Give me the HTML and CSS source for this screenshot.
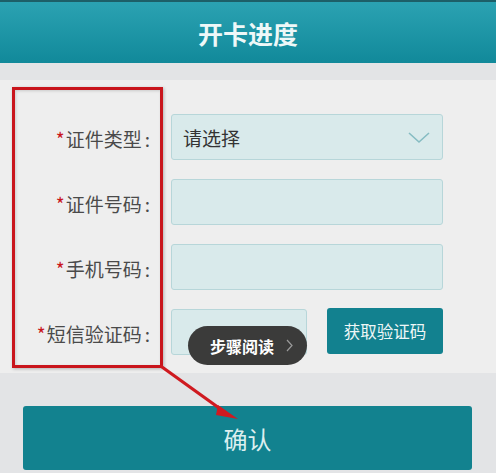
FILE: index.html
```html
<!DOCTYPE html>
<html lang="zh-CN">
<head>
<meta charset="utf-8">
<title>开卡进度</title>
<link rel="stylesheet" href="styles.css">
</head>
<body>
<header class="topbar"><h1 class="title">开卡进度</h1></header>
<main class="page">
  <section class="panel">
    <div class="row">
      <label class="label"><span class="req">*</span>证件类型<span class="colon">:</span></label>
      <div class="field select">
        <span class="select-text">请选择</span>
        <svg class="chev" width="22" height="12" viewBox="0 0 22 12"><path d="M1 1 L11 10 L21 1" fill="none" stroke="#86bcc2" stroke-width="1.6"/></svg>
      </div>
    </div>
    <div class="row">
      <label class="label"><span class="req">*</span>证件号码<span class="colon">:</span></label>
      <div class="field"></div>
    </div>
    <div class="row">
      <label class="label"><span class="req">*</span>手机号码<span class="colon">:</span></label>
      <div class="field"></div>
    </div>
    <div class="row">
      <label class="label"><span class="req">*</span>短信验证码<span class="colon">:</span></label>
      <div class="code-wrap">
        <div class="field short"></div>
        <button class="code-btn">获取验证码</button>
      </div>
    </div>
  </section>
  <div class="confirm-wrap"><button class="confirm">确认</button></div>

  <div class="mark-box"></div>
  <svg class="mark-arrow" width="100" height="70" viewBox="0 0 100 70">
    <path d="M2 2 L66 48" stroke="#cf1a20" stroke-width="3.2" fill="none" stroke-linecap="round"/>
    <path d="M58 40 L78 54 L56 50 Z" fill="#cf1a20"/>
  </svg>
  <div class="toast">步骤阅读<svg class="toast-chev" width="7" height="13" viewBox="0 0 7 13"><path d="M1 1 L6 6.5 L1 12" fill="none" stroke="#9a9a9a" stroke-width="1.2"/></svg></div>
</main>
</body>
</html>
```
FILE: styles.css
```css
* { box-sizing: border-box; }
html, body { margin: 0; padding: 0; }
body {
  width: 496px;
  height: 473px;
  overflow: hidden;
  background: #e3e4e6;
  font-family: "Noto Sans CJK SC", "Noto Sans", sans-serif;
  color: #444;
}
.topbar {
  height: 63px;
  border-top: 2px solid #1d5f68;
  background: linear-gradient(#2ba2b2, #11899a);
  display: flex;
  align-items: center;
  justify-content: center;
}
.title {
  margin: 0;
  font-size: 25px;
  font-weight: 700;
  color: #eef8f8;
}
.page {
  position: relative;
  padding-top: 17px;
}
.panel {
  background: #eeeeee;
  padding: 34px 0 18px 0;
  display: flex;
  flex-direction: column;
  gap: 19px;
}
.row {
  display: grid;
  grid-template-columns: 150px 272px;
  column-gap: 21px;
  align-items: center;
  height: 46px;
}
.label {
  text-align: right;
  font-size: 19px;
  color: #4a4a4a;
  white-space: nowrap;
  padding-top: 3px;
}
.colon { margin-left: 3px; }
.req { color: #c9161d; margin-right: 1px; }
.field {
  height: 46px;
  background: #d9eaeb;
  border: 1px solid #b7d6d9;
  border-radius: 3px;
}
.select {
  display: flex;
  align-items: center;
  justify-content: space-between;
  padding: 0 12px 0 11px;
}
.select-text { font-size: 19px; color: #333; }
.chev { display: block; margin-top: 2px; }
.code-wrap {
  display: flex;
  gap: 20px;
  width: 272px;
}
.field.short { width: 136px; }
.code-btn {
  width: 116px;
  height: 46px;
  border: 0;
  border-radius: 3px;
  background: #12818f;
  color: #eef7f7;
  font-family: inherit;
  font-size: 16.5px;
  padding: 0;
  margin-top: -1px;
}
.confirm-wrap { padding: 33px 24px 0 23px; }
.confirm {
  width: 449px;
  height: 64px;
  border: 0;
  border-radius: 3px;
  background: #12828f;
  color: #dcefef;
  font-family: inherit;
  font-size: 24px;
  padding: 0;
}
.mark-box {
  position: absolute;
  left: 12px;
  top: 24px;
  width: 151px;
  height: 281px;
  border: 3px solid #c9151c;
  box-shadow: 1px 1px 3px rgba(0,0,0,0.25), inset 1px 1px 3px rgba(0,0,0,0.15);
}
.mark-arrow {
  position: absolute;
  left: 160px;
  top: 302px;
}
.toast {
  position: absolute;
  left: 188px;
  top: 263px;
  width: 119px;
  height: 39px;
  border-radius: 20px;
  background: #3b3b3a;
  color: #fff;
  font-size: 16px;
  font-weight: 700;
  display: flex;
  align-items: center;
  padding-left: 22px;
}
.toast-chev {
  margin-left: 12px;
  display: block;
}
```
